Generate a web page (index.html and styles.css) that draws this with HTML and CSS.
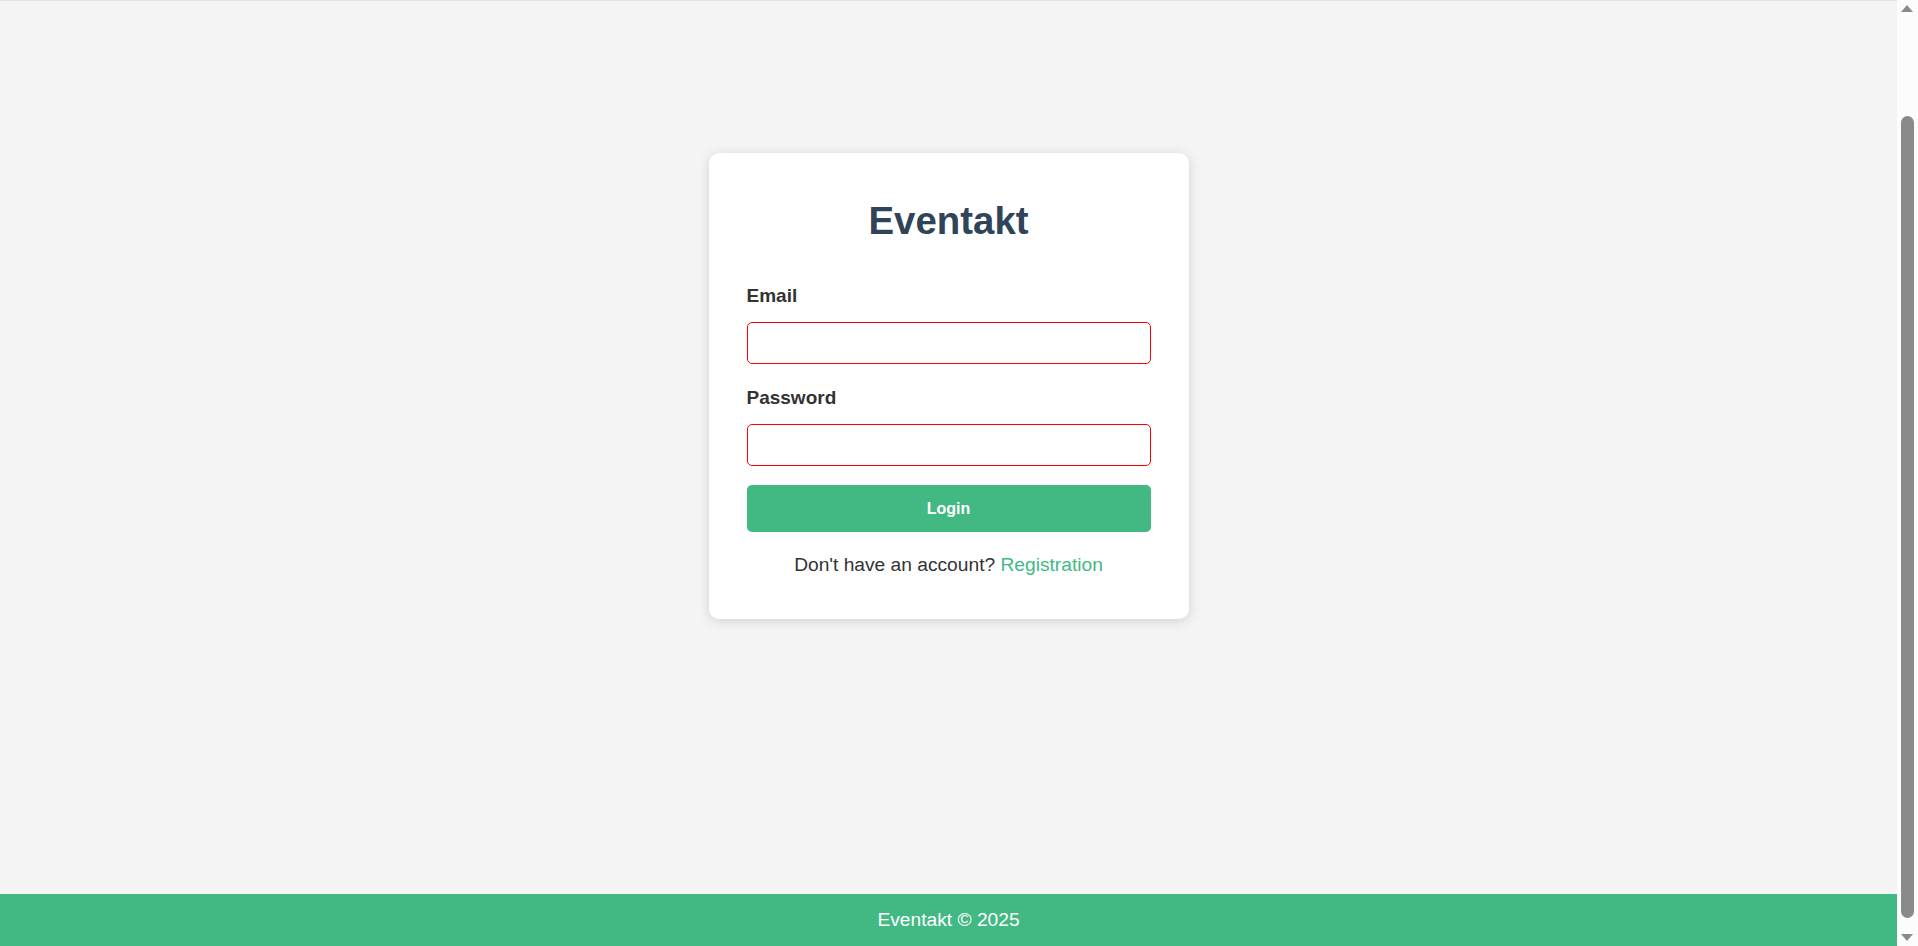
FILE: index.html
```html
<!DOCTYPE html>
<html lang="en">
<head>
<meta charset="utf-8">
<title>Eventakt</title>
<link rel="stylesheet" href="styles.css">
</head>
<body>
<div class="topbar"></div>
<main class="main">
  <div class="card">
    <h1 class="title">Eventakt</h1>
    <form class="form">
      <div class="group">
        <label class="label" for="email">Email</label>
        <input class="input" id="email" type="email">
      </div>
      <div class="group group-last">
        <label class="label" for="password">Password</label>
        <input class="input" id="password" type="password">
      </div>
      <button class="btn" type="button">Login</button>
    </form>
    <p class="switch">Don't have an account? <a class="link" href="#">Registration</a></p>
  </div>
</main>
<footer class="footer">Eventakt © 2025</footer>
<div class="scrollbar" aria-hidden="true">
  <span class="arrow arrow-up"></span>
  <span class="thumb"></span>
  <span class="arrow arrow-down"></span>
</div>
<script src="script.js"></script>
</body>
</html>
```

FILE: styles.css
```css
html, body {
  margin: 0;
  padding: 0;
}
html {
  scrollbar-width: none;
}
html::-webkit-scrollbar {
  display: none;
}
body {
  background: #f4f4f4;
  font-family: "Liberation Sans", Arial, sans-serif;
  color: #333;
  padding-right: 21px;
}
.topbar {
  height: 120px;
  border-bottom: 1px solid #e2e2e2;
}
.main {
  display: flex;
  justify-content: center;
  padding: 152px 0 275px;
}
.card {
  width: 480px;
  box-sizing: border-box;
  background: #fff;
  border-radius: 10px;
  box-shadow: 0 2px 12px rgba(0, 0, 0, 0.14);
  padding: 46px 38px 43px;
}
.title {
  margin: 0 0 42px;
  font-size: 38.4px;
  line-height: 44px;
  font-weight: bold;
  text-align: center;
  color: #2f4458;
}
.form {
  display: flex;
  flex-direction: column;
}
.group {
  display: flex;
  flex-direction: column;
  margin-bottom: 23px;
}
.group-last {
  margin-bottom: 19px;
}
.label {
  font-size: 19px;
  line-height: 22px;
  font-weight: bold;
  color: #333;
  margin-bottom: 15px;
}
.input {
  height: 42px;
  box-sizing: border-box;
  border: 1px solid #ff0000;
  border-radius: 5px;
  background: #fff;
  padding: 0 10px;
  font-size: 19px;
  font-family: "Liberation Sans", Arial, sans-serif;
  outline: none;
}
.btn {
  height: 47px;
  border: none;
  border-radius: 5px;
  background: #42b983;
  color: #fff;
  font-family: "Liberation Sans", Arial, sans-serif;
  font-size: 16px;
  font-weight: bold;
  cursor: pointer;
}
.switch {
  margin: 22px 0 0;
  font-size: 19.2px;
  line-height: 22px;
  text-align: center;
  color: #333;
}
.link {
  color: #42b983;
  text-decoration: none;
}
.footer {
  background: #42b983;
  color: #fff;
  text-align: center;
  font-size: 19.2px;
  line-height: 22px;
  padding: 15px 0 45px;
}
.scrollbar {
  position: fixed;
  top: 0;
  right: 0;
  width: 21px;
  height: 100vh;
  background: #fcfcfc;
}
.thumb {
  position: absolute;
  top: 116px;
  left: 4px;
  width: 13px;
  height: 802px;
  border-radius: 7px;
  background: #8a8a8a;
}
.arrow {
  position: absolute;
  left: 4px;
  width: 0;
  height: 0;
  border-left: 6.5px solid transparent;
  border-right: 6.5px solid transparent;
}
.arrow-up {
  top: 5px;
  border-bottom: 7px solid #8a8a8a;
}
.arrow-down {
  bottom: 5px;
  border-top: 7px solid #8a8a8a;
}
```

FILE: script.js
```js
window.scrollTo(0, 120);
```
